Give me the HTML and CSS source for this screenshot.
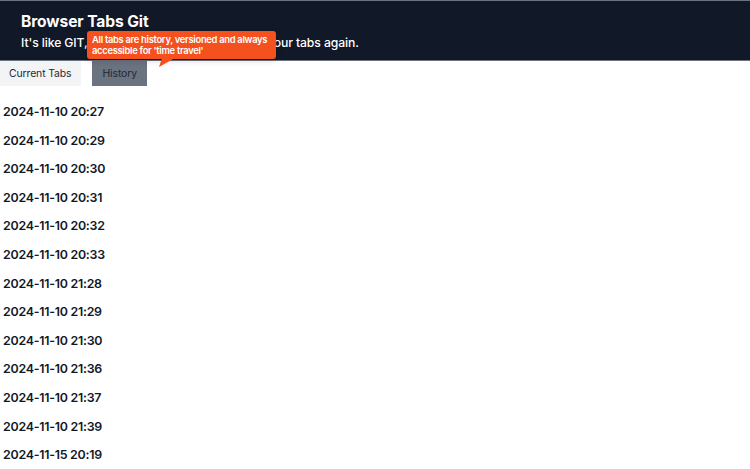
FILE: index.html
```html
<!DOCTYPE html>
<html>
<head>
<meta charset="utf-8">
<link rel="stylesheet" href="styles.css">
</head>
<body>
<header class="top">
  <h1 class="title">Browser Tabs Git</h1>
  <p class="subtitle">It's like GIT, but for the browser. Don't lose your tabs again.</p>
  <div class="tooltip">All tabs are history, versioned and always<br>accessible for 'time travel'</div>
</header>
<nav class="tabs">
  <button class="tab">Current Tabs</button>
  <button class="tab active">History</button>
</nav>
<main class="list">
  <div class="entry">2024-11-10 20:27</div>
  <div class="entry">2024-11-10 20:29</div>
  <div class="entry">2024-11-10 20:30</div>
  <div class="entry">2024-11-10 20:31</div>
  <div class="entry">2024-11-10 20:32</div>
  <div class="entry">2024-11-10 20:33</div>
  <div class="entry">2024-11-10 21:28</div>
  <div class="entry">2024-11-10 21:29</div>
  <div class="entry">2024-11-10 21:30</div>
  <div class="entry">2024-11-10 21:36</div>
  <div class="entry">2024-11-10 21:37</div>
  <div class="entry">2024-11-10 21:39</div>
  <div class="entry">2024-11-15 20:19</div>
</main>
</body>
</html>
```
FILE: styles.css
```css
html, body {
  margin: 0;
  padding: 0;
  background: #ffffff;
  font-family: Inter, "Noto Sans", sans-serif;
  color: #111827;
  overflow: hidden;
}
.top {
  position: relative;
  background: #111827;
  border-top: 1px solid #6b7280;
  border-bottom: 1px solid #6b7280;
  height: 59px;
  box-sizing: content-box;
  padding: 0 21px;
  color: #ffffff;
}
.title {
  margin: 0;
  padding-top: 11px;
  font-size: 15.6px;
  font-weight: 700;
  line-height: 20px;
  letter-spacing: -0.1px;
}
.subtitle {
  margin: 2px 0 0 0;
  font-size: 12.2px;
  font-weight: 500;
  line-height: 17px;
  letter-spacing: -0.1px;
}
.tooltip {
  position: absolute;
  left: 87px;
  top: 30px;
  width: 179px;
  padding: 3px 5px 3px 5px;
  background: #f4511e;
  color: #ffffff;
  font-size: 9.4px;
  font-weight: 600;
  line-height: 11px;
  letter-spacing: -0.3px;
  white-space: nowrap;
  border-radius: 3px;
  box-shadow: 0 2px 6px rgba(0,0,0,0.15);
  z-index: 2;
}
.tooltip::after {
  content: "";
  position: absolute;
  left: 72px;
  bottom: -8px;
  width: 16px;
  height: 9px;
  background: #f4511e;
  clip-path: polygon(3px 0, 16px 0, 0 9px);
}
.tabs {
  display: flex;
  gap: 11px;
  height: 25px;
}
.tab {
  border: none;
  margin: 0;
  font-family: Inter, "Noto Sans", sans-serif;
  font-size: 10.4px;
  letter-spacing: -0.1px;
  color: #1f2937;
  background: #f3f4f6;
  padding: 0 9px;
  height: 25px;
  cursor: pointer;
}
.tab.active {
  background: #6b7280;
  padding: 0 10px 0 11px;
}
.list {
  padding: 12px 0 0 3px;
}
.entry {
  height: 28.6px;
  line-height: 28.6px;
  font-size: 12.4px;
  font-weight: 600;
  letter-spacing: -0.25px;
  color: #111827;
}
```
